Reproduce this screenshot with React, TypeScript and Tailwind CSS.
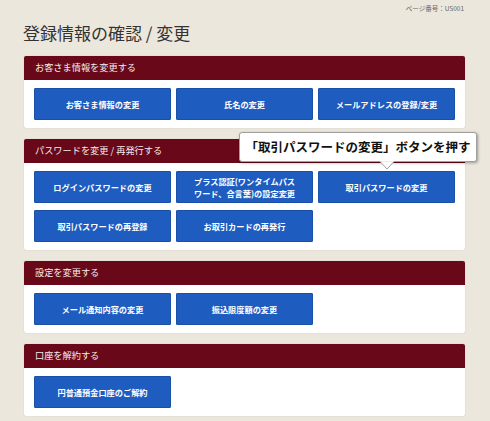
import React from "react";

const sections: { title: string; buttons: string[][] }[] = [
  {
    title: "お客さま情報を変更する",
    buttons: [["お客さま情報の変更"], ["氏名の変更"], ["メールアドレスの登録/変更"]],
  },
  {
    title: "パスワードを変更 / 再発行する",
    buttons: [
      ["ログインパスワードの変更"],
      ["プラス認証(ワンタイムパス", "ワード、合言葉)の設定変更"],
      ["取引パスワードの変更"],
      ["取引パスワードの再登録"],
      ["お取引カードの再発行"],
    ],
  },
  {
    title: "設定を変更する",
    buttons: [["メール通知内容の変更"], ["振込限度額の変更"]],
  },
  {
    title: "口座を解約する",
    buttons: [["円普通預金口座のご解約"]],
  },
];

const font = { fontFamily: '"Noto Sans CJK JP", "Noto Sans", sans-serif' };

const Section = ({ title, buttons }: { title: string; buttons: string[][] }) => (
  <div className="mb-[11px] overflow-hidden rounded-[2px] bg-white shadow-[0_0_1px_rgba(0,0,0,0.25)]">
    <div className="flex h-[24px] items-center bg-[#680818] pl-[11px] text-[9.2px] text-[#f4ecec]">
      {title}
    </div>
    <div className="grid grid-cols-3 gap-x-[5px] gap-y-[7px] px-[10px] pt-[8px] pb-[8px]">
      {buttons.map((lines, i) => (
        <div
          key={i}
          className="flex h-[32px] flex-col items-center justify-center rounded-[1px] border border-[#1a50a8] bg-[#1e5cc0] text-center text-[8.2px] font-bold leading-[12px] text-white"
        >
          {lines.map((l, j) => (
            <span key={j}>{l}</span>
          ))}
        </div>
      ))}
    </div>
  </div>
);

export default function App() {
  return (
    <div className="relative h-[421px] w-[490px] overflow-hidden bg-[#ece7dc]" style={font}>
      <div className="flex justify-end pt-[3px] pr-[26px] text-[6.5px] leading-[10px] text-[#666]">ページ番号：US001</div>
      <h1 className="mt-[8px] pl-[23px] text-[17px] leading-[24px] text-[#333]">登録情報の確認 / 変更</h1>
      <div className="mt-[11px] pl-[24px] pr-[25px]">
        {sections.map((s) => (
          <Section key={s.title} title={s.title} buttons={s.buttons} />
        ))}
      </div>

      {/* callout */}
      <div className="absolute left-[239px] top-[132px] flex h-[30px] w-[238px] items-center justify-center rounded-[3px] border border-[#a0a0a0] bg-white text-[12.5px] font-bold text-[#111] shadow-[1px_1px_3px_rgba(0,0,0,0.35)]">
        「取引パスワードの変更」ボタンを押す
        <svg className="absolute left-[140px] top-[28px]" width="14" height="9" viewBox="0 0 14 9">
          <path d="M0 0.5 L7 8 L14 0.5" fill="white" stroke="#a0a0a0" strokeWidth="1" />
          <rect x="0.5" y="-1" width="13" height="1.6" fill="white" />
        </svg>
      </div>
    </div>
  );
}
